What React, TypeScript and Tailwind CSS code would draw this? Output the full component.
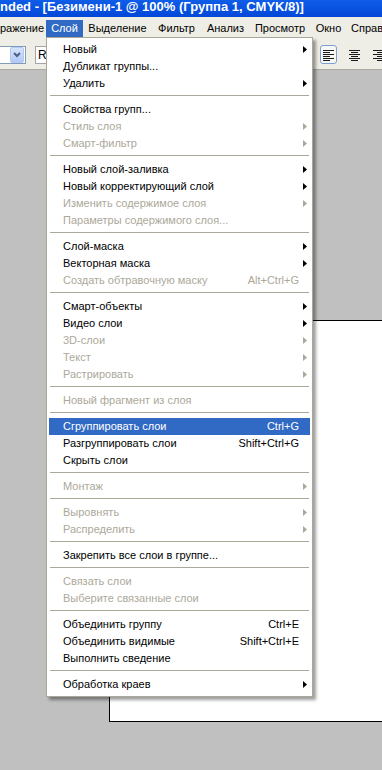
import React from "react";

type Item =
  | { sep: true }
  | { t: string; arrow?: boolean; dis?: boolean; sc?: string; hl?: boolean };

const S: Item = { sep: true };

const items: Item[] = [
  { t: "Новый", arrow: true },
  { t: "Дубликат группы..." },
  { t: "Удалить", arrow: true },
  S,
  { t: "Свойства групп..." },
  { t: "Стиль слоя", arrow: true, dis: true },
  { t: "Смарт-фильтр", arrow: true, dis: true },
  S,
  { t: "Новый слой-заливка", arrow: true },
  { t: "Новый корректирующий слой", arrow: true },
  { t: "Изменить содержимое слоя", arrow: true, dis: true },
  { t: "Параметры содержимого слоя...", dis: true },
  S,
  { t: "Слой-маска", arrow: true },
  { t: "Векторная маска", arrow: true },
  { t: "Создать обтравочную маску", sc: "Alt+Ctrl+G", dis: true },
  S,
  { t: "Смарт-объекты", arrow: true },
  { t: "Видео слои", arrow: true },
  { t: "3D-слои", arrow: true, dis: true },
  { t: "Текст", arrow: true, dis: true },
  { t: "Растрировать", arrow: true, dis: true },
  S,
  { t: "Новый фрагмент из слоя", dis: true },
  S,
  { t: "Сгруппировать слои", sc: "Ctrl+G", hl: true },
  { t: "Разгруппировать слои", sc: "Shift+Ctrl+G" },
  { t: "Скрыть слои" },
  S,
  { t: "Монтаж", arrow: true, dis: true },
  S,
  { t: "Выровнять", arrow: true, dis: true },
  { t: "Распределить", arrow: true, dis: true },
  S,
  { t: "Закрепить все слои в группе..." },
  S,
  { t: "Связать слои", dis: true },
  { t: "Выберите связанные слои", dis: true },
  S,
  { t: "Объединить группу", sc: "Ctrl+E" },
  { t: "Объединить видимые", sc: "Shift+Ctrl+E" },
  { t: "Выполнить сведение" },
  S,
  { t: "Обработка краев", arrow: true },
];

const menuBar = [
  { t: "ражение", w: "w-[46px]", left: true },
  { t: "Слой", w: "w-[37px]", active: true },
  { t: "Выделение", w: "w-[69px]" },
  { t: "Фильтр", w: "w-[49px]" },
  { t: "Анализ", w: "w-[49px]" },
  { t: "Просмотр", w: "w-[60px]" },
  { t: "Окно", w: "w-[37px]" },
  { t: "Справ", w: "w-[35px]", left: true },
];

function Arrow({ color }: { color: string }) {
  return (
    <svg width="4" height="7" viewBox="0 0 4 7">
      <path d="M0 0L4 3.5L0 7Z" fill={color} />
    </svg>
  );
}

function AlignIcon({ kind }: { kind: "l" | "c" | "r" }) {
  const widths = [11, 7, 11, 7, 11, 7];
  return (
    <svg width="11" height="12" viewBox="0 0 11 12">
      {widths.map((w, i) => {
        const x = kind === "l" ? 0 : kind === "c" ? (11 - w) / 2 : 11 - w;
        return <rect key={i} x={x} y={i * 2 + 1} width={w} height="1" fill="#1a1a1a" />;
      })}
    </svg>
  );
}

export default function App() {
  return (
    <div
      className="relative w-[382px] h-[770px] overflow-hidden bg-[#c0c0c0] text-[11px] text-black"
      style={{ fontFamily: '"Liberation Sans", Arial, sans-serif' }}
    >
      {/* title bar */}
      <div className="h-[17px] bg-gradient-to-b from-[#0f5de8] to-[#0447d8] overflow-hidden whitespace-nowrap">
        <div className="text-white font-bold text-[13px] leading-[13px] pl-0">
          nded - [Безимени-1 @ 100% (Группа 1, CMYK/8)]
        </div>
      </div>
      {/* menu bar */}
      <div className="h-[20px] bg-[#eeede6] flex items-end whitespace-nowrap overflow-hidden">
        {menuBar.map((m, i) => (
          <div
            key={m.t}
            className={`h-[17px] shrink-0 flex items-center ${m.w} ${
              m.left ? "justify-start" : "justify-center"
            } ${i === 7 ? "pl-[4px]" : ""} ${m.active ? "bg-[#316ac5] text-white" : ""}`}
          >
            {m.t}
          </div>
        ))}
      </div>
      {/* options toolbar */}
      <div className="h-[33px] bg-[#eeede6] border-b border-[#a9a9a4] relative">
        <div className="absolute left-[-2px] top-[9px] w-[28px] h-[18px] bg-white border border-[#7f9db9] flex justify-end items-center pr-[1px]">
          <div className="w-[14px] h-[16px] rounded-[2px] bg-gradient-to-b from-[#d6e3fd] to-[#b2c9f7] border border-[#b5c8f2] flex items-center justify-center">
            <svg width="8" height="6" viewBox="0 0 8 6">
              <path d="M1 1L4 4L7 1" stroke="#4d6185" strokeWidth="2" fill="none" />
            </svg>
          </div>
        </div>
        <div className="absolute left-[35px] top-[9px] w-[20px] h-[18px] bg-white border border-[#a5a5a5] pl-[2px] flex items-center text-[12px]">
          R
        </div>
        <div className="absolute left-[320px] top-[8px] w-[17px] h-[19px] rounded-[3px] border border-[#7d9fd3] bg-[#f7f7f4] flex items-center justify-center">
          <AlignIcon kind="l" />
        </div>
        <div className="absolute left-[349px] top-[12px]">
          <AlignIcon kind="c" />
        </div>
        <div className="absolute left-[373px] top-[12px]">
          <AlignIcon kind="r" />
        </div>
      </div>
      {/* workspace */}
      <div className="pt-[250px]">
        <div className="ml-[109px] h-[402px] bg-white border border-r-0 border-black" />
      </div>

      {/* dropdown menu */}
      <div className="absolute left-[46px] top-[37px] w-[267px] bg-white border border-[#aca899] px-[2px] pt-[3px] pb-[3px] shadow-[3px_3px_3px_rgba(0,0,0,0.38)] whitespace-nowrap">
        {items.map((it, i) => {
          if ("sep" in it) {
            return (
              <div key={i} className="h-[9px] pt-[3px] px-[1px]">
                <div className="h-px bg-[#aca899]" />
              </div>
            );
          }
          const color = it.hl ? "text-white" : it.dis ? "text-[#aca899]" : "text-black";
          return (
            <div
              key={i}
              className={`h-[17px] flex items-center pl-[14px] ${color} ${
                it.hl ? "bg-[#316ac5]" : ""
              }`}
            >
              <span className="flex-1">{it.t}</span>
              {it.sc && <span>{it.sc}</span>}
              <span className="w-[11px] pl-[4px] flex items-center">
                {it.arrow && <Arrow color={it.dis ? "#aca899" : "#000"} />}
              </span>
            </div>
          );
        })}
      </div>
    </div>
  );
}
